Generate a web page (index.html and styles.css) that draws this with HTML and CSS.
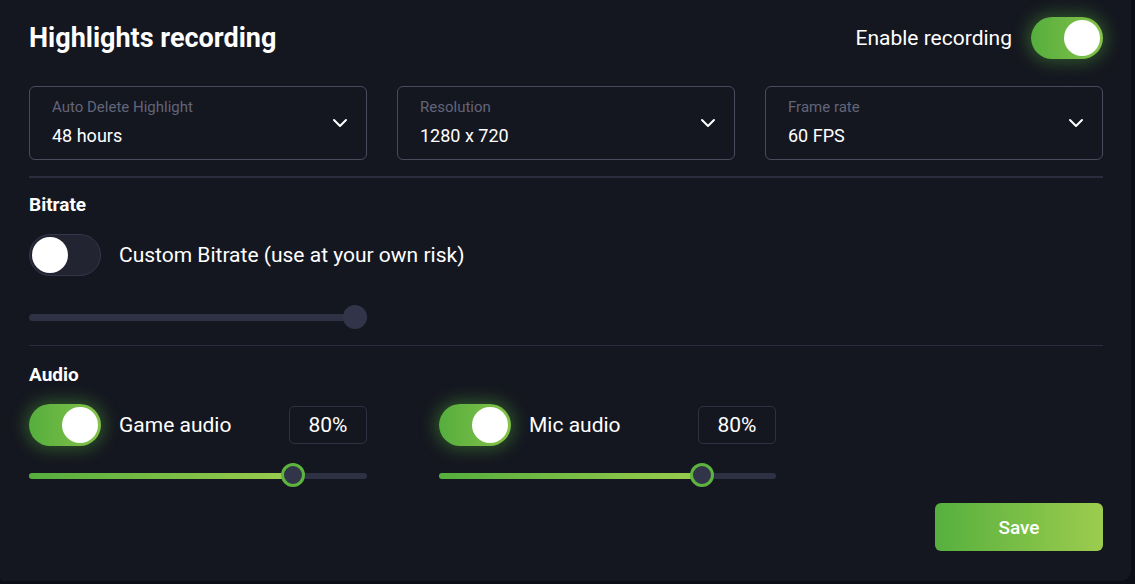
FILE: index.html
```html
<!DOCTYPE html>
<html lang="en">
<head>
<meta charset="utf-8">
<title>Highlights recording</title>
<link rel="stylesheet" href="styles.css">
</head>
<body>
<div class="panel">
  <div class="header">
    <h1 class="title">Highlights recording</h1>
    <div class="enable">
      <span class="enable-label">Enable recording</span>
      <span class="toggle on"><span class="knob"></span></span>
    </div>
  </div>

  <div class="selects">
    <div class="select">
      <div class="select-text">
        <span class="select-label">Auto Delete Highlight</span>
        <span class="select-value">48 hours</span>
      </div>
      <svg class="chev" width="16" height="10" viewBox="0 0 16 10"><path d="M2 2l6 6 6-6" fill="none" stroke="#fff" stroke-width="2" stroke-linecap="round" stroke-linejoin="round"/></svg>
    </div>
    <div class="select">
      <div class="select-text">
        <span class="select-label">Resolution</span>
        <span class="select-value">1280 x 720</span>
      </div>
      <svg class="chev" width="16" height="10" viewBox="0 0 16 10"><path d="M2 2l6 6 6-6" fill="none" stroke="#fff" stroke-width="2" stroke-linecap="round" stroke-linejoin="round"/></svg>
    </div>
    <div class="select">
      <div class="select-text">
        <span class="select-label">Frame rate</span>
        <span class="select-value">60 FPS</span>
      </div>
      <svg class="chev" width="16" height="10" viewBox="0 0 16 10"><path d="M2 2l6 6 6-6" fill="none" stroke="#fff" stroke-width="2" stroke-linecap="round" stroke-linejoin="round"/></svg>
    </div>
  </div>

  <div class="divider thick"></div>

  <h2 class="section">Bitrate</h2>
  <div class="row">
    <span class="toggle off"><span class="knob"></span></span>
    <span class="row-label">Custom Bitrate (use at your own risk)</span>
  </div>
  <div class="slider bitrate">
    <div class="track"></div>
    <div class="thumb"></div>
  </div>

  <div class="divider"></div>

  <h2 class="section audio-title">Audio</h2>
  <div class="audio">
    <div class="channel">
      <div class="row">
        <span class="toggle on"><span class="knob"></span></span>
        <span class="row-label">Game audio</span>
        <span class="pct">80%</span>
      </div>
      <div class="slider green">
        <div class="track"><div class="fill" style="width: 78%"></div></div>
        <div class="thumb" style="left: 78%"></div>
      </div>
    </div>
    <div class="channel">
      <div class="row">
        <span class="toggle on"><span class="knob"></span></span>
        <span class="row-label">Mic audio</span>
        <span class="pct">80%</span>
      </div>
      <div class="slider green">
        <div class="track"><div class="fill" style="width: 78%"></div></div>
        <div class="thumb" style="left: 78%"></div>
      </div>
    </div>
  </div>

  <div class="footer">
    <button class="save">Save</button>
  </div>
</div>
</body>
</html>
```

FILE: styles.css
```css
* { box-sizing: border-box; }
html, body { margin: 0; padding: 0; }
body {
  background: #0c0e17;
  font-family: Roboto, "Liberation Sans", Arial, sans-serif;
  color: #fff;
  width: 1135px;
  height: 584px;
  overflow: hidden;
}
.panel {
  width: 1131px;
  height: 581px;
  background: #151720;
  border-radius: 0 0 10px 4px;
  padding: 17px 28px 0 29px;
  display: flex;
  flex-direction: column;
}
.header {
  display: flex;
  align-items: center;
  justify-content: space-between;
  height: 42px;
}
.title {
  margin: 0;
  font-size: 27px;
  font-weight: 700;
  line-height: 30px;
}
.enable {
  display: flex;
  align-items: center;
  gap: 19px;
}
.enable-label {
  font-size: 21px;
}
.toggle {
  width: 72px;
  height: 42px;
  border-radius: 21px;
  display: flex;
  align-items: center;
  padding: 3px;
  flex: none;
}
.toggle .knob {
  width: 36px;
  height: 36px;
  border-radius: 50%;
  background: #fff;
}
.toggle.on {
  background: linear-gradient(90deg, #55ae3d, #86c24a);
  justify-content: flex-end;
  box-shadow: 0 0 16px 4px rgba(90, 190, 60, 0.35);
}
.toggle.off {
  background: #222431;
  border: 1px solid #34364a;
  padding: 2px;
}
.selects {
  margin-top: 27px;
  display: grid;
  grid-template-columns: repeat(3, 1fr);
  gap: 30px;
}
.select {
  height: 74px;
  border: 1px solid #494b5d;
  border-radius: 6px;
  display: flex;
  align-items: center;
  justify-content: space-between;
  padding: 0 18px 0 22px;
}
.select-text {
  display: flex;
  flex-direction: column;
  gap: 9px;
  margin-top: -2px;
}
.select-label {
  font-size: 15px;
  color: #62657a;
  line-height: 18px;
}
.select-value {
  font-size: 18px;
  line-height: 22px;
}
.divider {
  height: 1px;
  background: #2b2d3c;
  margin-top: 16px;
}
.divider.thick {
  height: 2px;
}
.section {
  margin: 15px 0 0;
  font-size: 19px;
  font-weight: 700;
  line-height: 24px;
}
.section.audio-title { margin-top: 17px; }
.row {
  display: flex;
  align-items: center;
  height: 42px;
}
.section + .row { margin-top: 17px; }
.row-label {
  font-size: 21px;
  margin-left: 18px;
  flex: 1;
}
.pct {
  width: 78px;
  height: 38px;
  border: 1px solid #2f3143;
  border-radius: 5px;
  display: flex;
  align-items: center;
  justify-content: center;
  font-size: 21px;
}
.slider {
  position: relative;
  height: 24px;
  width: 338px;
}
.slider.bitrate { margin-top: 29px; }
.track {
  position: absolute;
  left: 0;
  right: 0;
  top: 9px;
  height: 7px;
  border-radius: 4px;
  background: #2f3144;
  overflow: hidden;
}
.fill {
  height: 100%;
  background: linear-gradient(90deg, #55ae3d, #9bcb4d);
}
.thumb {
  position: absolute;
  top: 0;
  width: 24px;
  height: 24px;
  border-radius: 50%;
  background: #32344a;
}
.bitrate .thumb { right: 0; }
.green .thumb {
  border: 3px solid #5cb43f;
  transform: translateX(-12px);
}
.audio {
  margin-top: 17px;
  display: grid;
  grid-template-columns: 338px 337px;
  gap: 72px;
}
.channel .slider { margin-top: 17px; width: 100%; }
.audio .track { top: 10px; height: 6px; background: #2e3043; }
.footer {
  display: flex;
  justify-content: flex-end;
  margin-top: 16px;
}
.save {
  width: 168px;
  height: 48px;
  border: none;
  border-radius: 6px;
  background: linear-gradient(90deg, #56b03e, #9ccc4e);
  color: #fff;
  font-family: Roboto, "Liberation Sans", Arial, sans-serif;
  font-size: 19px;
  font-weight: 500;
}
```
